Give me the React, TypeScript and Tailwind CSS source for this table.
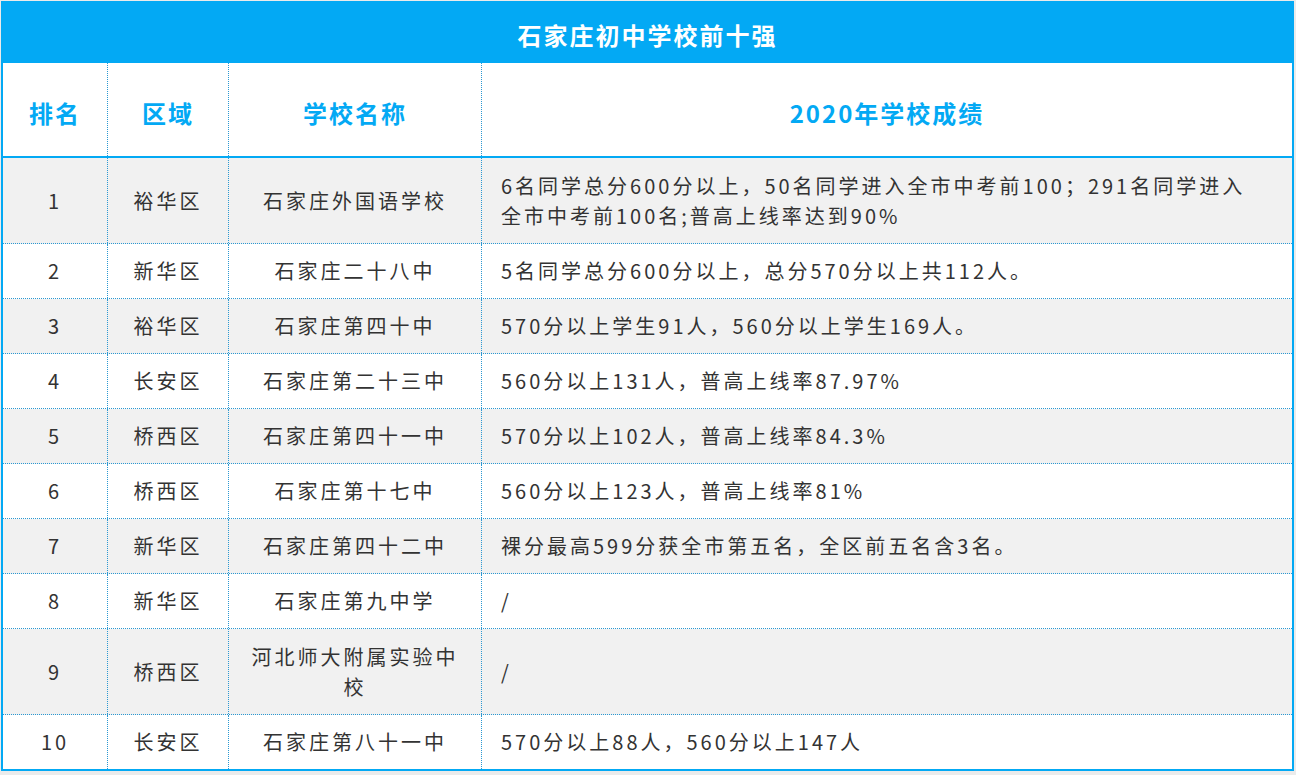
import React from "react";

type Row = { rank: string; area: string; school: string[]; result: string[]; tall?: boolean };

const rows: Row[] = [
  {
    rank: "1",
    area: "裕华区",
    school: ["石家庄外国语学校"],
    result: [
      "6名同学总分600分以上，50名同学进入全市中考前100；291名同学进入",
      "全市中考前100名;普高上线率达到90%",
    ],
    tall: true,
  },
  { rank: "2", area: "新华区", school: ["石家庄二十八中"], result: ["5名同学总分600分以上，总分570分以上共112人。"] },
  { rank: "3", area: "裕华区", school: ["石家庄第四十中"], result: ["570分以上学生91人，560分以上学生169人。"] },
  { rank: "4", area: "长安区", school: ["石家庄第二十三中"], result: ["560分以上131人，普高上线率87.97%"] },
  { rank: "5", area: "桥西区", school: ["石家庄第四十一中"], result: ["570分以上102人，普高上线率84.3%"] },
  { rank: "6", area: "桥西区", school: ["石家庄第十七中"], result: ["560分以上123人，普高上线率81%"] },
  { rank: "7", area: "新华区", school: ["石家庄第四十二中"], result: ["裸分最高599分获全市第五名，全区前五名含3名。"] },
  { rank: "8", area: "新华区", school: ["石家庄第九中学"], result: ["/"] },
  { rank: "9", area: "桥西区", school: ["河北师大附属实验中", "校"], result: ["/"], tall: true },
  { rank: "10", area: "长安区", school: ["石家庄第八十一中"], result: ["570分以上88人，560分以上147人"] },
];

function Lines({ lines }: { lines: string[] }) {
  return (
    <span>
      {lines.map((l, i) => (
        <React.Fragment key={i}>
          {i > 0 && <br />}
          {l}
        </React.Fragment>
      ))}
    </span>
  );
}

export default function App() {
  return (
    <div className="min-h-[775px] bg-[#ebebeb] pl-[1px] pt-[1px] font-['Noto_Sans_CJK_SC','Noto_Sans',sans-serif]">
      <div className="w-[1293px] border-2 border-[#03a9f4] bg-white">
        <div className="flex h-[60px] items-center justify-center bg-[#03a9f4] pt-[4px] text-[24px] font-bold tracking-[2px] text-white">
          石家庄初中学校前十强
        </div>
        <div className="grid h-[95px] grid-cols-[105px_121px_253px_1fr] border-b-2 border-[#03a9f4] text-[24px] font-bold tracking-[2px] text-[#03a9f4]">
          <div className="flex items-center justify-center border-r border-dotted border-r-[#2a98d2] pt-[6px]">排名</div>
          <div className="flex items-center justify-center border-r border-dotted border-r-[#2a98d2] pt-[6px]">区域</div>
          <div className="flex items-center justify-center border-r border-dotted border-r-[#2a98d2] pt-[6px]">学校名称</div>
          <div className="flex items-center justify-center pt-[6px]">2020年学校成绩</div>
        </div>
        {rows.map((r, i) => {
          const last = i === rows.length - 1;
          return (
            <div
              key={r.rank}
              className={
                "grid grid-cols-[105px_121px_253px_1fr] text-[20px] leading-[30px] tracking-[3px] text-[#333333] " +
                (i % 2 === 0 ? "bg-[#f1f1f1] " : "bg-white ") +
                (r.tall ? "h-[86px] " : last ? "h-[54px] " : "h-[55px] ") +
                (last ? "" : "border-b border-dotted border-b-[#2a98d2]")
              }
            >
              <div className="flex items-center justify-center border-r border-dotted border-r-[#2a98d2] text-center">
                {r.rank}
              </div>
              <div className="flex items-center justify-center border-r border-dotted border-r-[#2a98d2] text-center">
                {r.area}
              </div>
              <div className="flex items-center justify-center border-r border-dotted border-r-[#2a98d2] text-center">
                <Lines lines={r.school} />
              </div>
              <div className="flex items-center pl-[19px] text-left">
                <Lines lines={r.result} />
              </div>
            </div>
          );
        })}
      </div>
    </div>
  );
}
